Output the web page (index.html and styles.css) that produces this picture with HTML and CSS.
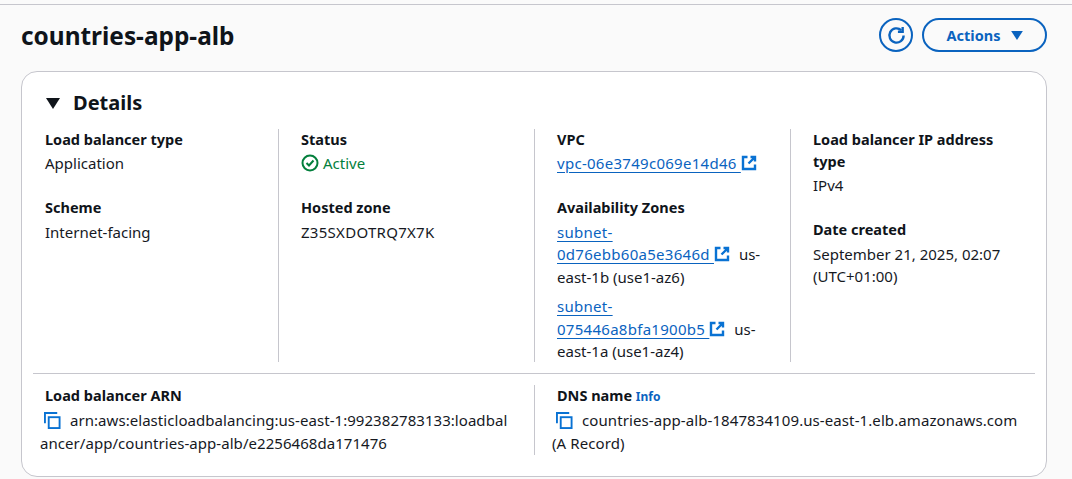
FILE: index.html
```html
<!DOCTYPE html>
<html lang="en">
<head>
<meta charset="utf-8">
<title>countries-app-alb</title>
<link rel="stylesheet" href="styles.css">
</head>
<body>
<svg class="defs" width="0" height="0" aria-hidden="true">
  <symbol id="ext" viewBox="0 0 16 16"><path d="M6.500 2H2v12h12V9.500M9.500 2H14v4.500M14 2 7.500 8.500" fill="none" stroke="currentColor" stroke-width="2.400"/></symbol>
  <symbol id="copy" viewBox="0 0 18 18"><path d="M1 12V1h13" fill="none" stroke="currentColor" stroke-width="2"/><rect x="5" y="5.500" width="11.500" height="11.500" fill="none" stroke="currentColor" stroke-width="2"/></symbol>
</svg>
<main class="page">
  <header class="head">
    <h1 class="title">countries-app-alb</h1>
    <div class="actions">
      <button class="round" aria-label="Refresh">
        <svg width="19" height="19" viewBox="0 0 16 16"><path d="M14 8a6 6 0 1 1-2-4.500" fill="none" stroke="currentColor" stroke-width="2"/><path d="M13.200 .8v4h-4" fill="none" stroke="currentColor" stroke-width="2"/></svg>
      </button>
      <button class="pill">Actions<svg class="caret" width="12" height="9" viewBox="0 0 13 10"><path d="M0 0h13L6.500 10z" fill="currentColor"/></svg></button>
    </div>
  </header>
  <section class="card">
    <h2 class="sec-title"><svg class="sec-caret" width="16" height="11" viewBox="0 0 16 11"><path d="M1 0h14L8 11z" fill="currentColor"/></svg>Details</h2>
    <div class="cols">
      <div class="col">
        <div class="kv"><div class="k">Load balancer type</div><div class="v">Application</div></div>
        <div class="kv"><div class="k">Scheme</div><div class="v">Internet-facing</div></div>
      </div>
      <div class="col">
        <div class="kv"><div class="k">Status</div><div class="v ok"><svg class="ok-icon" width="18" height="18" viewBox="0 0 18 18"><circle cx="9" cy="9" r="7.500" fill="none" stroke="currentColor" stroke-width="2"/><path d="m5.500 9 2.500 2.500 4.500-5" fill="none" stroke="currentColor" stroke-width="2"/></svg>Active</div></div>
        <div class="kv"><div class="k">Hosted zone</div><div class="v id">Z35SXDOTRQ7X7K</div></div>
      </div>
      <div class="col">
        <div class="kv"><div class="k">VPC</div><div class="v id"><a class="lnk" href="#"><span class="u">vpc-06e3749c069e14d46 </span><svg class="ext"><use href="#ext"/></svg></a></div></div>
        <div class="kv"><div class="k">Availability Zones</div>
          <div class="v az"><a class="lnk id" href="#"><span class="u">subnet-</span><span class="nb"><span class="u">0d76ebb60a5e3646d </span><svg class="ext spaced"><use href="#ext"/></svg></span></a> <span>us-</span><span>east-1b (use1-az6)</span></div>
          <div class="v az"><a class="lnk id" href="#"><span class="u">subnet-</span><span class="nb"><span class="u">075446a8bfa1900b5 </span><svg class="ext spaced"><use href="#ext"/></svg></span></a> <span>us-</span><span>east-1a (use1-az4)</span></div>
        </div>
      </div>
      <div class="col">
        <div class="kv"><div class="k">Load balancer IP address type</div><div class="v">IPv4</div></div>
        <div class="kv"><div class="k">Date created</div><div class="v">September 21, 2025, 02:07 (UTC+01:00)</div></div>
      </div>
    </div>
    <div class="rows">
      <div class="wide">
        <div class="k">Load balancer ARN</div>
        <div class="v brk"><svg class="copy"><use href="#copy"/></svg>arn:aws:elasticloadbalancing:us-east-1:992382783133:loadbalancer/app/countries-app-alb/e2256468da171476</div>
      </div>
      <div class="wide">
        <div class="k">DNS name <a class="info" href="#">Info</a></div>
        <div class="v dns"><svg class="copy"><use href="#copy"/></svg>countries-app-alb-1847834109.us-east-1.elb.amazonaws.com (A Record)</div>
      </div>
    </div>
  </section>
</main>
</body>
</html>
```
FILE: styles.css
```css
* { box-sizing: border-box; }
html, body { margin: 0; height: 100%; }
body {
  background: #fafafa;
  color: #16191f;
  font-family: "Noto Sans", "Open Sans", sans-serif;
  font-size: 15px;
  line-height: 22px;
  overflow: hidden;
}
.defs { position: absolute; }
.page { padding: 0 25px 0 21px; border-top: 1px solid #c6c6cd; margin-top: 4px; }
.head { display: flex; justify-content: space-between; align-items: center; height: 60px; margin-bottom: 6px; }
.title { margin: 2px 0 0; font-size: 24.400px; line-height: 30px; font-weight: 700; color: #0f141a; }
.actions { display: flex; align-items: center; gap: 9px; }
.round, .pill {
  display: flex; align-items: center; justify-content: center;
  height: 34px; border: 2px solid #0a63bf; border-radius: 17px;
  background: transparent; color: #0a63bf; padding: 0;
  font: 700 14.500px/20px "Noto Sans", "Open Sans", sans-serif;
}
.round { width: 34px; }
.pill { width: 125px; gap: 11px; padding-left: 1px; }
.card {
  background: #fff; border: 1px solid #c6c6cd; border-radius: 16px;
  height: 406px; padding: 0 11px;
}
.sec-title {
  display: flex; align-items: center; margin: 0; padding: 5px 0 0 12px;
  font-size: 20px; line-height: 26px; font-weight: 700; color: #0f141a; height: 57px;
}
.sec-caret { margin-right: 12px; }
.cols { display: grid; grid-template-columns: 246px 256px 256px 244px; grid-template-rows: 233px; }
.col { padding: 0 12px 0 22px; border-right: 1px solid #c6c6cd; display: flex; flex-direction: column; gap: 22px; }
.col:first-child { padding-left: 12px; }
.col:last-child { border-right: 0; }
.k { font-size: 14.500px; font-weight: 700; color: #0f141a; margin-top: -1px; }
.kv + .kv .k { margin-top: 0; }
.v { color: #16191f; margin-top: 2px; }
.kv + .kv .v { margin-top: 3px; }
.kv + .kv .az { line-height: 22.250px; }
.kv + .kv .az + .az { margin-top: 7.500px; }
.id { letter-spacing: .28px; }
.ok { color: #037f3c; display: flex; align-items: center; gap: 4px; }
.lnk { color: #0a63bf; text-decoration: none; }
.u { text-decoration: underline; text-underline-offset: 3px; }
.nb { white-space: nowrap; }
.ext { width: 16px; height: 16px; color: #0972d3; vertical-align: -2px; }
.spaced { margin-right: 5px; }
.rows {
  display: grid; grid-template-columns: 501px 501px; border-top: 1px solid #c6c6cd;
  margin-top: 11px; padding-top: 11px;
}
.wide { height: 70px; padding: 0 22px 0 12px; }
.wide + .wide { border-left: 1px solid #c6c6cd; padding: 0 12px 0 22px; }
.wide .k { height: 22px; }
.wide .v { margin: 3px 0 0 -5px; line-height: 22.500px; }
.brk { word-break: break-all; letter-spacing: .05px; }
.dns { letter-spacing: .09px; }
.copy { width: 17px; height: 17px; color: #0972d3; vertical-align: -3px; margin: 0 9px 0 4px; }
.info { color: #0a63bf; font-size: 12px; font-weight: 700; text-decoration: none; }
```
